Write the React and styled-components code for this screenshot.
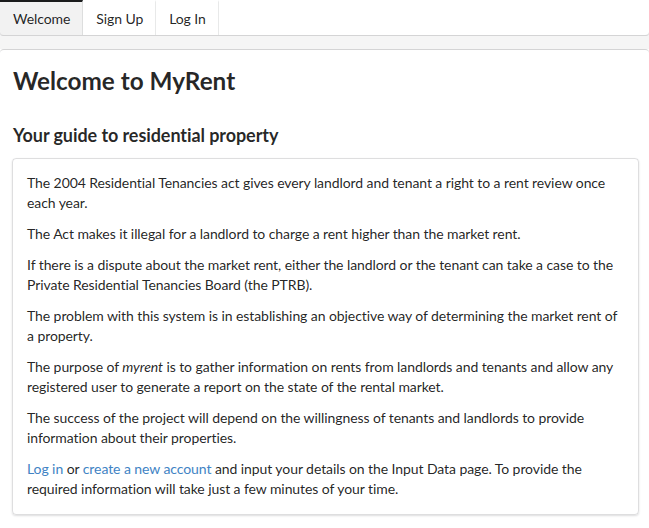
import React from "react"
import styled, { createGlobalStyle } from "styled-components"

const GlobalStyle = createGlobalStyle`
  html, body {
    margin: 0;
    padding: 0;
    background: #ffffff;
  }
  body {
    font-family: Lato, "Helvetica Neue", Arial, sans-serif;
    font-size: 14px;
    line-height: 1.4285em;
    letter-spacing: -0.08px;
    color: rgba(0, 0, 0, 0.87);
  }
`

const StyledNav = styled.nav`
  display: flex;
  height: 36px;
  box-sizing: border-box;
  border-bottom: 1px solid #d4d4d5;
  border-radius: 0 0 4px 4px;
  background: #ffffff;
  box-shadow: 0 1px 2px 0 rgba(34, 36, 38, 0.15);
`

const StyledNavItem = styled.a`
  display: flex;
  align-items: center;
  padding: 0 12px 0 13px;
  color: rgba(0, 0, 0, 0.87);
  font-size: 14px;
  text-decoration: none;
  border-right: 1px solid rgba(34, 36, 38, 0.1);
  border-top: 2px solid ${props => (props.$active ? "#1b1c1d" : "transparent")};
  border-radius: ${props => (props.$active ? "0 0 0 4px" : "0")};
  background: ${props => (props.$active ? "rgba(0, 0, 0, 0.05)" : "transparent")};
  cursor: pointer;
`

const StyledGap = styled.div`
  height: 13px;
  background: #f5f5f5;
`

const StyledMain = styled.main`
  border-top: 1px solid #d4d4d5;
  border-bottom: 1px solid #d4d4d5;
  border-radius: 4px 4px 0 0;
  padding: 13px 10px 14px 13px;
  background: #ffffff;
`

const StyledTitle = styled.h1`
  margin: 0;
  padding-top: 1px;
  font-size: 24.3px;
  font-weight: 700;
  line-height: 34px;
  letter-spacing: 0;
  color: rgba(0, 0, 0, 0.85);
`

const StyledSubtitle = styled.h3`
  margin: 26px 0 12px;
  font-size: 18px;
  font-weight: 700;
  line-height: 22px;
  color: rgba(0, 0, 0, 0.85);
`

const StyledCard = styled.section`
  margin-left: -1px;
  padding: 14px 14px 4px;
  border: 1px solid rgba(34, 36, 38, 0.15);
  border-radius: 4px;
  box-shadow: 0 1px 2px 0 rgba(34, 36, 38, 0.15);
`

const StyledParagraph = styled.p`
  margin: 0 0 11px;
  line-height: 20px;
`

const StyledLink = styled.a`
  color: #4183c4;
  text-decoration: none;
  cursor: pointer;
`

const navItems = ["Welcome", "Sign Up", "Log In"]

const App = () => {
  return (
    <>
      <GlobalStyle />
      <StyledNav>
        {navItems.map(item => (
          <StyledNavItem key={item} $active={item === "Welcome"}>
            {item}
          </StyledNavItem>
        ))}
      </StyledNav>
      <StyledGap />
      <StyledMain>
        <StyledTitle>Welcome to MyRent</StyledTitle>
        <StyledSubtitle>Your guide to residential property</StyledSubtitle>
        <StyledCard>
          <StyledParagraph>
            The 2004 Residential Tenancies act gives every landlord and tenant a
            right to a rent review once each year.
          </StyledParagraph>
          <StyledParagraph>
            The Act makes it illegal for a landlord to charge a rent higher than
            the market rent.
          </StyledParagraph>
          <StyledParagraph>
            If there is a dispute about the market rent, either the landlord or
            the tenant can take a case to the Private Residential Tenancies Board
            (the PTRB).
          </StyledParagraph>
          <StyledParagraph>
            The problem with this system is in establishing an objective way of
            determining the market rent of a property.
          </StyledParagraph>
          <StyledParagraph>
            The purpose of <em>myrent</em> is to gather information on rents from
            landlords and tenants and allow any registered user to generate a
            report on the state of the rental market.
          </StyledParagraph>
          <StyledParagraph>
            The success of the project will depend on the willingness of tenants
            and landlords to provide information about their properties.
          </StyledParagraph>
          <StyledParagraph>
            <StyledLink>Log in</StyledLink> or{" "}
            <StyledLink>create a new account</StyledLink> and input your details
            on the Input Data page. To provide the required information will take
            just a few minutes of your time.
          </StyledParagraph>
        </StyledCard>
      </StyledMain>
    </>
  )
}

export default App
